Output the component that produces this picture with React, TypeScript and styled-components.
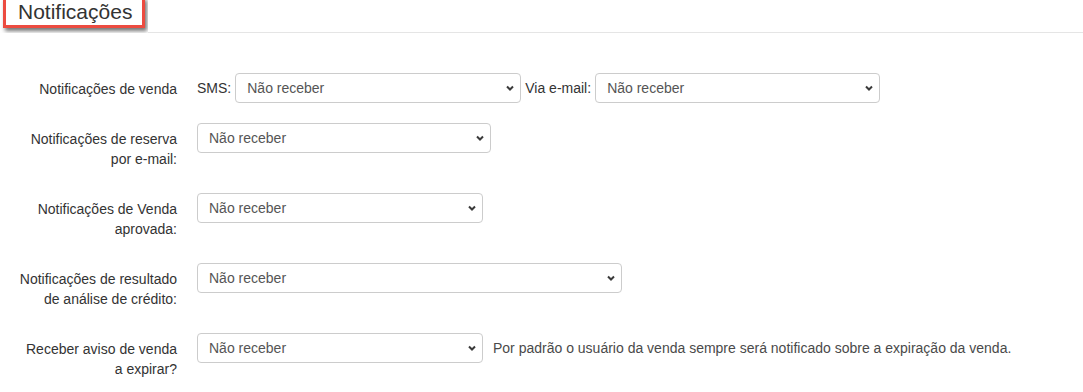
import React from "react";
import styled, { createGlobalStyle } from "styled-components";

const GlobalStyle = createGlobalStyle`
  html, body { margin: 0; padding: 0; background: #fff; }
  body {
    font-family: "Liberation Sans", Arial, Helvetica, sans-serif;
    font-size: 14px;
    color: #333;
  }
  * { box-sizing: border-box; }
`;

const Page = styled.div`
  width: 1083px;
  min-height: 392px;
  background: #fff;
  overflow: hidden;
`;

const Header = styled.div`
  position: relative;
  padding: 0 0 8px 18px;
  border-bottom: 1px solid #e5e5e5;
  font-size: 21px;
  line-height: 24px;
  color: #333;
`;

const TitleText = styled.span`
  position: relative;
  z-index: 1;
`;

const Annotation = styled.div`
  position: absolute;
  left: 0;
  top: 0;
  width: 148px;
  height: 33px;
  background: #fff;
  z-index: 0;
  overflow: hidden;
`;

const AnnotationFrame = styled.div`
  margin: -3px 0 0 3px;
  width: 142px;
  height: 31px;
  border: 3px solid #ec4b40;
  box-shadow: 2px 3px 4px rgba(0, 0, 0, 0.55);
`;

const Form = styled.div`
  padding-top: 40px;
`;

const Row = styled.div`
  display: flex;
  align-items: flex-start;
  margin-bottom: 20px;
`;

const Label = styled.div`
  flex: none;
  width: 177px;
  padding: 6px 0 4px 17px;
  text-align: right;
  line-height: 20px;
  color: #333;
`;

const Controls = styled.div`
  display: flex;
  align-items: center;
  gap: 4px;
  margin-left: 20px;
  height: 30px;
`;

const Inline = styled.span`
  color: #333;
  line-height: 20px;
`;

const SelectWrap = styled.div<{ $w: number }>`
  position: relative;
  width: ${(p) => p.$w}px;
  height: 30px;
`;

const Select = styled.select`
  appearance: none;
  -webkit-appearance: none;
  width: 100%;
  height: 30px;
  margin: 0;
  padding: 0 24px 0 11px;
  border: 1px solid #ccc;
  border-radius: 4px;
  background: #fff;
  color: #555;
  font-family: "Liberation Sans", Arial, Helvetica, sans-serif;
  font-size: 14px;
  line-height: 20px;
  outline: none;
`;

const Chevron = styled.svg`
  position: absolute;
  right: 7px;
  top: 12px;
  width: 8px;
  height: 6px;
  pointer-events: none;
`;

const Help = styled.span`
  margin-left: 6px;
  color: #4a4a4a;
  line-height: 20px;
  white-space: nowrap;
`;

const Dropdown: React.FC<{ width: number }> = ({ width }) => (
  <SelectWrap $w={width}>
    <Select defaultValue="0">
      <option value="0">Não receber</option>
      <option value="1">Receber</option>
    </Select>
    <Chevron viewBox="0 0 8 6">
      <path d="M1 1.5 L4 4.5 L7 1.5" fill="none" stroke="#3a3a3a" strokeWidth="2" />
    </Chevron>
  </SelectWrap>
);

export default function App() {
  return (
    <Page>
      <GlobalStyle />
      <Header>
        <Annotation>
          <AnnotationFrame />
        </Annotation>
        <TitleText>Notificações</TitleText>
      </Header>
      <Form>
        <Row>
          <Label>Notificações de venda</Label>
          <Controls>
            <Inline>SMS:</Inline>
            <Dropdown width={286} />
            <Inline>Via e-mail:</Inline>
            <Dropdown width={285} />
          </Controls>
        </Row>
        <Row>
          <Label>Notificações de reserva por e-mail:</Label>
          <Controls>
            <Dropdown width={294} />
          </Controls>
        </Row>
        <Row>
          <Label>Notificações de Venda aprovada:</Label>
          <Controls>
            <Dropdown width={286} />
          </Controls>
        </Row>
        <Row>
          <Label>Notificações de resultado de análise de crédito:</Label>
          <Controls>
            <Dropdown width={425} />
          </Controls>
        </Row>
        <Row>
          <Label>Receber aviso de venda a expirar?</Label>
          <Controls>
            <Dropdown width={286} />
            <Help>Por padrão o usuário da venda sempre será notificado sobre a expiração da venda.</Help>
          </Controls>
        </Row>
      </Form>
    </Page>
  );
}
